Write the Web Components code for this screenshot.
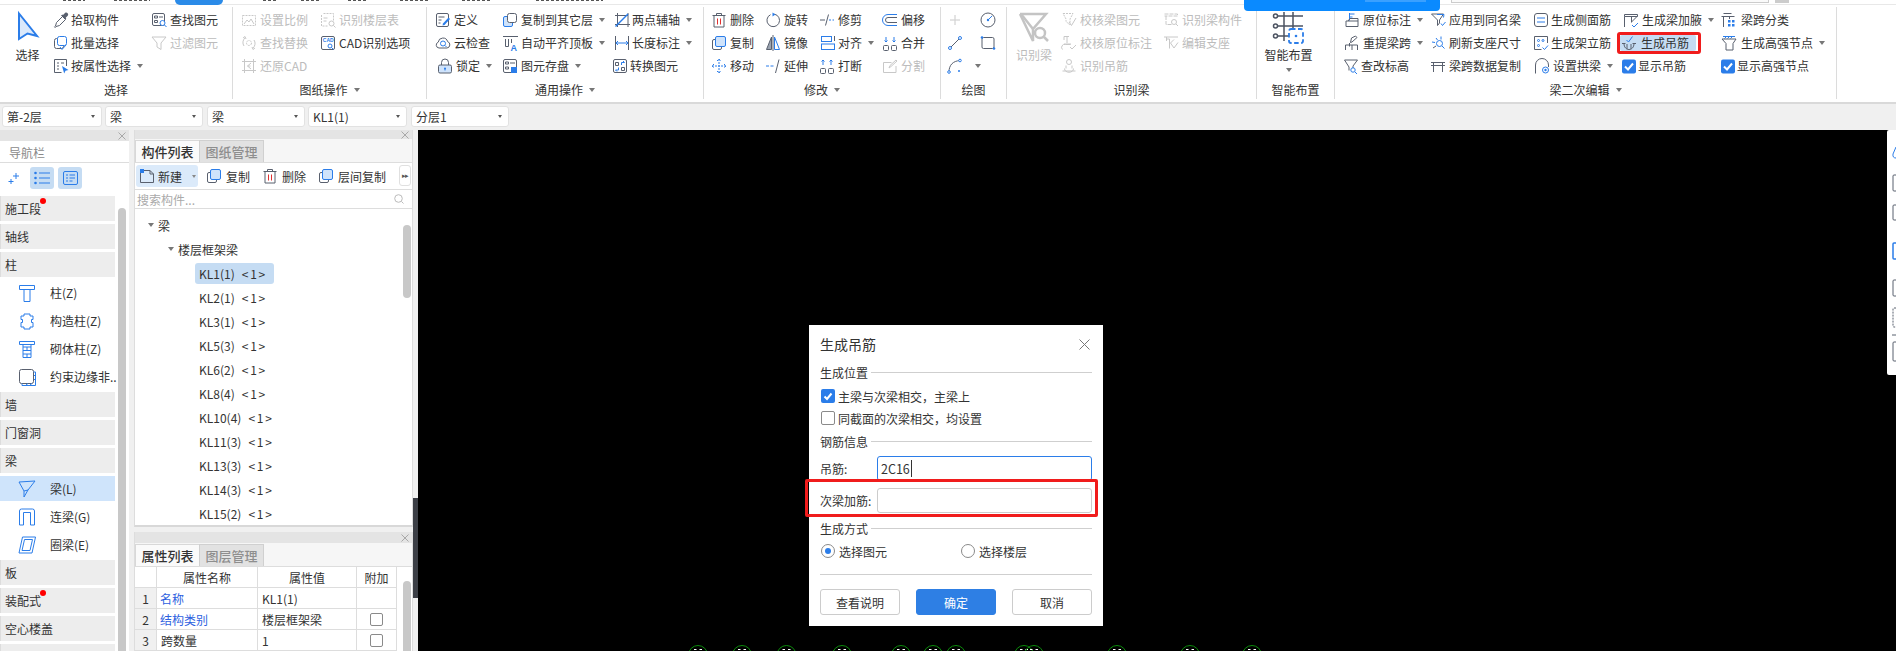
<!DOCTYPE html>
<html lang="zh"><head><meta charset="utf-8"><title>生成吊筋</title>
<style>html,body{margin:0;padding:0;width:1896px;height:651px;overflow:hidden;background:#f0f0f0}</style>
</head><body><gtj-app></gtj-app>
<script>
const I={
picker:'<path d="M9.5 4.5L3.5 10.5 2.5 14l-1 .8.7.7.8-1 3.5-1 6-6M8.5 3.5l4 4" /><path class="dk" d="M10 3l2-2c1-.8 2-.5 2.6.2s.9 1.6.1 2.6l-2 2 .6.8-1 1-4-4 1-1z"/>',
batch:'<rect x="1.5" y="3.5" width="9" height="10" rx="2"/><rect class="b w" x="4.5" y="1.5" width="9" height="9" rx="2"/><path class="b" d="M7 12l2 2.5 4-4.5"/>',
attrsel:'<path d="M13.5 8V1.5h-12v13h7"/><path d="M4 5h2M8 5h3M4 8h2M4 11h2"/><path class="f" d="M9 8l6.5 4-3 .7-1.3 2.8z"/>',
find:'<rect x="1.5" y="1.5" width="12" height="12" rx="1.5"/><path d="M3.5 4h3v2h-3zM8 5h4M3.5 8.5h3v2h-3z"/><circle class="b w" cx="11.5" cy="11" r="2.5"/><path class="b" d="M13.5 13l2 2"/>',
filter:'<path d="M1 2h14L10 8v6.5l-4-2.500V8z"/>',
scale:'<path stroke-dasharray="2 1" d="M1.500 3.500h13v10h-13z"/><path d="M3 12l3-4 2 2 2-3 3 5"/>',
floortable:'<path stroke-dasharray="2 1" d="M3.500 1.500h10v7M1.500 3v11h7"/><path d="M3.500 6h4M3.500 9h3"/><circle cx="11.500" cy="11.500" r="2.500"/><path d="M13.500 13.500l2 2"/>',
replace:'<path d="M3 11a6 6 0 0 1 1-8M13 5a6 6 0 0 1-1 8M2 3l2-1.500L5 4M14 13l-2 1.500L11 12"/><circle cx="8" cy="8" r="2.500" stroke-dasharray="2 1"/>',
cadopt:'<rect x="1.500" y="1.500" width="13" height="13" rx="1.500"/><text class="tx" x="2.800" y="7" font-size="5" font-weight="700">CAD</text><circle class="b w" cx="10" cy="11" r="2"/><path class="b" d="M11.500 12.500l2 2"/>',
restore:'<path d="M3.500 1v14M12.500 1v14M1 3.500h14M1 12.500h14"/><path d="M10 5L6.500 8 10 11M6.500 8h3"/>',
define:'<rect x="1.500" y="1.500" width="12" height="13" rx="1.500"/><path d="M3.500 5h6M3.500 8h3M3.500 11h2"/><path class="f" d="M13.500 5.500l1.500 1.500-5.500 6-2 .5.500-2z"/>',
cloud:'<path d="M4 13a3 3 0 0 1-.8-5.800 4.800 4.800 0 0 1 9.400-.600A3.300 3.300 0 0 1 12 13z"/><circle class="b" cx="8" cy="8.500" r="2.500"/><path class="b" d="M10 10.500l1.500 1.500"/>',
lock:'<path d="M4.500 7V4.500a3.500 3.500 0 0 1 7 0V7"/><rect class="l" x="1.500" y="7" width="13" height="8" rx="1.500"/><path class="b" d="M8 10v2.500"/><circle class="bf" cx="8" cy="10.500" r="1"/>',
copyfloor:'<rect class="l b" x="1.500" y="4.500" width="9" height="10" rx="1.500"/><rect class="w" x="5.500" y="1.500" width="9" height="9" rx="2"/>',
aligntop:'<path d="M1 1.500h15M3.500 4v7.500h3V4M9.500 4v4"/><text class="tx" x="8.500" y="15.500" font-size="9" font-weight="700">A</text>',
save:'<rect x="1.500" y="1.500" width="13" height="13" rx="1.500"/><path d="M3.500 4h3v2h-3zM8 5h5M3.500 9h3v2h-3z"/><rect class="f" x="9" y="9" width="6" height="6"/>',
twoaxis:'<path d="M3.500 1v14M14 3.500H1M14 1v14M1 12.500h15"/><path class="b" d="M1.500 14.500L14 2" stroke-width="1.500"/>',
dim:'<path d="M1.500 1v14M14.500 1v14"/><path class="b" d="M2 8h12M4 6L2 8l2 2M12 6l2 2-2 2"/>',
convert:'<rect x="1.500" y="1.500" width="13" height="13" rx="1.500"/><path d="M3.500 4.500h3v3h-3zM9.500 9.500h3v3h-3z"/><path class="b" d="M9.500 7V4.500h3l-1.500-1.500M6.500 9.500V12h-3l1.500 1.500"/>',
del:'<path d="M1.500 3.500h13M5.500 3V1.500h5V3M3 3.500h10v11.500H3z"/><path stroke="#e33" style="stroke:#e03030" d="M6.500 6.500v6M9.500 6.500v6"/>',
rotate:'<path d="M9.500 2.200a6.300 6.300 0 1 1-4 .5"/><path class="f" style="stroke:none" d="M7.500 .5v4l3-2z"/>',
trim:'<path d="M1 8h5"/><path class="b" d="M10 8h5" stroke-dasharray="2 1.500"/><path d="M9.500 2.500L6.500 13.500"/>',
offset:'<path class="b" d="M15 2.500H6a5.500 5.500 0 0 0 0 11h9"/><path d="M15 5.500H6a2.500 2.500 0 0 0 0 5h9"/>',
copy:'<rect x="1.500" y="4.500" width="9" height="10" rx="1.500"/><rect class="l b" x="4.500" y="1.500" width="10" height="10" rx="1.500"/>',
mirror:'<path d="M6.500 2L1.500 14.500h5z" style="fill:#9aa3b0"/><path class="b" d="M9.500 2l5 12.500h-5z"/><path d="M8 0v16"/>',
align:'<rect class="b" x="2.500" y="1.500" width="10" height="5"/><rect class="b" x="2.500" y="9" width="13" height="5.500"/><path d="M15.500 1v5"/>',
merge:'<rect x="1.500" y="10.500" width="5" height="5" rx="1"/><rect x="9.500" y="10.500" width="5" height="5" rx="1"/><path class="b" d="M4 2v5M2.500 5.500L4 7l1.500-1.500M12 2v5M10.500 5.500L12 7l1.500-1.500"/>',
move:'<path class="b" d="M8 1v14M1 8h14M6 3l2-2 2 2M6 13l2 2 2-2M3 6L1 8l2 2M13 6l2 2-2 2" stroke-dasharray="2 1"/>',
extend:'<path class="b" d="M1 8h9" stroke-dasharray="3 1.500"/><path d="M14 1.500L10.500 15"/>',
brk:'<rect x="1.500" y="10.500" width="5" height="5" rx="1"/><rect x="9.500" y="10.500" width="5" height="5" rx="1"/><path class="b" d="M4 7V2M2.500 3.500L4 2l1.500 1.500M12 7V2M10.500 3.500L12 2l1.500 1.500"/>',
split:'<path d="M14 8v6.500H1.500V4.500h8"/><path d="M7 10l1-2.500L14 2l1 1-6 5.500z"/>',
point:'<path d="M8 3v3M8 10v3M3 8h3M10 8h3"/><circle cx="8" cy="8" r="1.200"/>',
circle:'<circle cx="8" cy="8" r="7"/><path class="b" d="M8 8l4-4"/><circle class="bf" cx="8" cy="8" r="1.200"/>',
line:'<path d="M3 13L13 3"/><circle class="b w" cx="3" cy="13" r="1.500"/><circle class="b w" cx="13" cy="3" r="1.500"/>',
rect:'<rect x="2" y="2.500" width="12" height="11" rx="1.500"/><circle class="bf" cx="2" cy="2.500" r="1.300"/><circle class="bf" cx="14" cy="13.500" r="1.300"/>',
arc:'<path d="M2 14C2 7 6 3 13 2.500"/><circle class="b w" cx="2" cy="14" r="1.300"/><circle class="b w" cx="13" cy="2.500" r="1.300"/><circle class="bf" cx="12" cy="13" r="1"/>',
chk1:'<path stroke-dasharray="2 1" d="M2 1.500h10L9 7v6L5 9.500V7z"/><path class="b" d="M8 10l2.500 3.500L15 6"/>',
chk2:'<path d="M6 2v6M3 5V1.500h5M3 9h7M1.500 14.500a3 3 0 0 1 3-5h5"/><path class="b" d="M9 12l2 2 4-4"/>',
hangr:'<circle cx="8" cy="4" r="2.500"/><path d="M5 7.500v3M11 7.500v3M1.500 13h13M3.500 10.500c0 5 9 5 9 0"/>',
beamcomp:'<path stroke-dasharray="4 1" d="M1.500 2h13v2H1.500M3 4v8.500h6"/><circle cx="11" cy="10" r="2.500"/><path d="M13 12l2 2"/>',
support:'<path d="M1 2h14M3.500 2v4M3.500 4h3v9.500M11 4.500L7.500 8l3.500 5 4-5.500"/>',
orig:'<path d="M5.500 1v7.500M5.500 2h5M5.500 5h3" class="b"/><path d="M2 9h12v5.500H2zM4 9l2-2.500h8L14 9"/>',
apply:'<path d="M1.500 2h12L9.500 8v3l-2 2.500V8z"/><path class="b" d="M7 2.500h7l-.5 3M11 11.500l1.500 2 3-3.500"/>',
side:'<rect x="1.500" y="1.500" width="13" height="13" rx="2.500"/><path class="b" d="M4 6h8M4 10h8"/>',
ridge:'<path d="M5.500 11.500V8M7.500 3l4-2 1.500 1.500-5 4.500-1.500.5z"/><path d="M1.500 15V10h12v5M8 10v5"/>',
refresh:'<path class="b" d="M11 1.500v3M6 3l1.500 2M2 7l3 .5"/><path d="M3 13l3-2"/><circle class="b" cx="9.500" cy="8.500" r="3"/><path class="b" d="M12 11l2.500 2.500"/>',
frame:'<path d="M14.500 8V1.500h-13v13h7"/><circle class="b" cx="5.500" cy="5.500" r="1"/><circle class="b" cx="10" cy="5.500" r="1"/><circle class="b" cx="5.500" cy="10.500" r="1"/><path class="b" d="M9.500 12.500l2 2 3.500-4"/>',
haunch:'<path d="M1.500 2.500h13v2H1.500zM1.500 4.500v10.500M8.500 4.500v6"/><path d="M14 4.500L8.500 10"/><path class="b" d="M9 13l2 2 4-4"/>',
hanger:'<path d="M1 8.500h3.500M11.500 8.500H15M3 8.500c0 8 10 8 10 0"/><path d="M6 9v5M10 9v5"/><path class="b" d="M5.500 5l2 2 4-5.500"/>',
elev:'<path d="M1.500 2h13L10 8v2M1.500 2l4.500 7v3.500"/><circle class="b" cx="10" cy="12" r="2.200"/><path class="b" d="M12 14l2 2"/>',
spancopy:'<path d="M1 4.500h14M3.500 4.500V14M12.500 4.500V14M1 7.500h14"/>',
arch:'<path d="M1.500 12V7a6.500 6.500 0 0 1 13 0v2"/><path d="M1.500 12v3.500"/><circle class="b" cx="11.500" cy="12" r="3"/><circle class="bf" cx="11.500" cy="12" r="1.200"/>',
spancls:'<path d="M2.500 1.500h8M0.500 4.500h13M2.500 4.500V15M8.500 5v2"/><g class="bf"><rect x="7" y="8" width="2.500" height="2.500"/><rect x="11" y="8" width="2.500" height="2.500"/><rect x="7" y="12" width="2.500" height="2.500"/><rect x="11" y="12" width="2.500" height="2.500"/></g>',
hsnode:'<path class="b" d="M2 1.500h12M3.500 3.500l2-2M6.500 3.500l2-2M9.500 3.500l2-2"/><path d="M1 4h14L12 8.500V15H5V8.500z"/>',
chk:'<rect class="bf" x="1" y="1.500" width="14" height="14" rx="2"/><path d="M4 8.500l3 3 5-6" style="stroke:#fff;stroke-width:2"/>'
};
class B extends HTMLElement{connectedCallback(){if(this.shadowRoot)return;const r=this.attachShadow({mode:'open'});r.innerHTML='<style>'+this.constructor.css+'</style>'+this.view();}view(){return'<slot></slot>'}}
const def=(n,css,view)=>{const C=class extends B{};C.css=css;if(view)C.prototype.view=view;customElements.define(n,C)};
const svgBase='svg{display:block;fill:none;stroke:currentColor;overflow:visible}.b{stroke:#2b7de9}.w{fill:#fff}.l{fill:#cfe3fb}.f,.bf{fill:#2b7de9;stroke:none}.dk{fill:currentColor;stroke:none}.tx{fill:#2b7de9;stroke:none;font-family:"Liberation Sans",sans-serif}';
const ic=(n,s=16)=>`<svg width="${s}" height="${s}" viewBox="0 0 16 16">${I[n]||''}</svg>`;

def('top-strip',':host{display:flex;height:5px;box-sizing:border-box;border-bottom:1px solid #e8e8e8;background:#fff;position:relative}.p{margin-left:175px;width:48px;height:5px;background:#2b8be8;border-radius:0 0 9px 9px}.s{margin-left:1228px;width:318px;height:3px;box-sizing:border-box;border:1px solid #ccc;border-top:0;background:#fafafa}.g{margin-left:6px;width:14px;height:3px;background:#ccc}svg{position:absolute;left:0;top:0;display:block}',
()=>'<svg width="700" height="2"><path d="M63 .5h22M114 .5h36M263 .5h14M301 .5h18M348 .5h18M400 .5h29M462 .5h29M536 .5h67" stroke="#555" stroke-dasharray="3 2"/></svg><div class="p"></div><div class="s"></div><div class="g"></div>');

def('rb-item',svgBase+':host{display:flex;align-items:center;height:23px;white-space:nowrap;position:relative;color:#333;line-height:16px}.i{color:#59606e;height:16px;flex:none;position:relative;z-index:1}.t{position:relative;z-index:1}.c{width:0;height:0;border:3px solid transparent;border-top:4px solid #777;border-bottom:0;margin-left:6px}:host([disabled]){color:#bcbcbc}:host([disabled]) .i{color:#c8c8c8}:host([disabled]) .b{stroke:#c8c8c8}:host([disabled]) .f,:host([disabled]) .bf{fill:#c8c8c8}:host([disabled]) .tx{fill:#c8c8c8}.bg{position:absolute;left:-1px;top:4px;width:76px;height:16px;background:#c5dcf3;border-radius:2px}.rd{position:absolute;left:-4px;top:1px;width:84px;height:22px;box-sizing:border-box;border:3px solid #f01c1c;border-radius:3px}',
function(){const a=k=>this.getAttribute(k);const o=+(a('o')||19),ml=+(a('ml')||0);this.style.marginLeft=ml+'px';
return (this.hasAttribute('hot')?'<div class="bg"></div><div class="rd"></div>':'')+`<div class="i" style="width:${o}px">${a('icon')?ic(a('icon')):''}</div><span class="t">${a('label')||''}</span>`+(this.hasAttribute('caret')?'<i class="c"></i>':'')});

def('rb-big',svgBase+':host{display:flex;flex-direction:column;align-items:center;height:69px;padding-top:4px;box-sizing:border-box;color:#333}.i{height:30px;display:flex;align-items:flex-start}.t{line-height:26px;white-space:nowrap}.c{width:0;height:0;border:3px solid transparent;border-top:4px solid #777;border-bottom:0;margin-top:0}:host([disabled]) .t{color:#bcbcbc}',
function(){const k=this.getAttribute('kind');const s={sel:'<svg width="22" height="28" viewBox="0 0 22 28"><path d="M2 1.500L20 24l-9.500-2.500L2 27z" style="fill:#dbe9fb;stroke:#2b7de9;stroke-width:2"/></svg>',
rec:'<svg width="32" height="30" viewBox="0 0 32 30"><g style="stroke:#c4c4c4;stroke-width:2.500"><path d="M2 2h26L15 17v12L2 2M15 17"/><path d="M3 2l12 15"/><circle cx="22" cy="21" r="5" fill="#fff"/><path d="M26 25l4 4"/></g></svg>',
smart:'<svg width="32" height="33" viewBox="0 0 32 33" style="margin-top:-1px"><g style="stroke:#4c5361;stroke-width:1.500"><path d="M11 1v29M20 1v29M4 5h26M4 15h26M4 25h16"/><g style="fill:#fff"><circle cx="2.500" cy="5" r="2"/><circle cx="2.500" cy="15" r="2"/><circle cx="2.500" cy="25" r="2"/></g></g><rect x="16" y="18" width="14" height="14" rx="2" style="fill:#fff;stroke:#2b7de9;stroke-width:1.800;stroke-dasharray:4.500 2.500"/><circle class="bf" cx="23" cy="25" r="1.300"/></svg>'}[k];
return `<div class="i">${s}</div><div class="t">${this.getAttribute('label')}</div>`+(this.hasAttribute('caret')?'<i class="c"></i>':'')});

def('rb-col',':host{display:flex;flex-direction:column;flex:none}');
def('rb-group',':host{display:flex;flex-direction:column;flex:none;height:92px;box-sizing:border-box;border-right:1px solid #dcdcdc;margin-top:2px}.b{display:flex;height:71px;padding-top:1px;box-sizing:border-box}.t{height:21px;padding-top:3px;box-sizing:border-box;line-height:18px;display:flex;justify-content:center;align-items:center;color:#333}.c{width:0;height:0;border:3.500px solid transparent;border-top:4px solid #777;border-bottom:0;margin-left:6px}',
function(){const a=k=>this.getAttribute(k);return `<div class="b" style="padding-left:${a('pl')||0}px"><slot></slot></div><div class="t"><span>${a('label')}</span>${this.hasAttribute('caret')?'<i class="c"></i>':''}</div>`});

const it=(icon,label,x={})=>`<rb-item icon="${icon}" label="${label}"${x.c?' caret':''}${x.d?' disabled':''}${x.hot?' hot':''}${x.o?` o="${x.o}"`:''}${x.ml?` ml="${x.ml}"`:''}></rb-item>`;
const col=(w,h)=>`<rb-col style="width:${w}px">${h}</rb-col>`;
const D={d:1},C={c:1};
const groups=[
['选择',233,0,0,col(53,'<rb-big kind="sel" label="选择" style="padding-left:2px"></rb-big>')+col(98,it('picker','拾取构件',{o:18})+it('batch','批量选择',{o:18})+it('attrsel','按属性选择',{o:18,c:1}))+col(70,it('find','查找图元')+it('filter','过滤图元',D))],
['图纸操作',194,8,1,col(79,it('scale','设置比例',D)+it('replace','查找替换',D)+it('restore','还原CAD',D))+col(100,it('floortable','识别楼层表',D)+it('cadopt','CAD识别选项'))],
['通用操作',277,8,1,col(67,it('define','定义')+it('cloud','云检查')+it('lock','锁定',{ml:2,c:1}))+col(112,it('copyfloor','复制到其它层',C)+it('aligntop','自动平齐顶板',C)+it('save','图元存盘',C))+col(85,it('twoaxis','两点辅轴',{o:18,c:1})+it('dim','长度标注',{o:18,c:1})+it('convert','转换图元',{ml:-2,o:18}))],
['修改',237,7,1,col(54,it('del','删除')+it('copy','复制')+it('move','移动'))+col(54,it('rotate','旋转')+it('mirror','镜像')+it('extend','延伸'))+col(63,it('trim','修剪')+it('align','对齐',C)+it('brk','打断'))+col(50,it('offset','偏移')+it('merge','合并')+it('split','分割',D))],
['绘图',66,6,0,col(33,it('point','',D)+it('line','')+it('arc','',{o:22,c:1}))+col(20,it('circle','')+it('rect',''))],
['识别梁',250,0,0,col(54,'<rb-big kind="rec" label="识别梁" disabled></rb-big>')+col(102,it('chk1','校核梁图元',D)+it('chk2','校核原位标注',D)+it('hangr','识别吊筋',D))+col(85,it('beamcomp','识别梁构件',D)+it('support','编辑支座',D))],
['智能布置',78,0,0,col(63,'<rb-big kind="smart" label="智能布置" caret></rb-big>')],
['梁二次编辑',502,9,1,col(86,it('orig','原位标注',C)+it('ridge','重提梁跨',C)+it('elev','查改标高',{ml:-1,o:18}))+col(103,it('apply','应用到同名梁')+it('refresh','刷新支座尺寸')+it('spancopy','梁跨数据复制'))+col(88,it('side','生成侧面筋',{o:18})+it('frame','生成架立筋',{o:18})+it('arch','设置拱梁',{ml:1,c:1}))+col(100,it('haunch','生成梁加腋',{ml:2,c:1})+it('hanger','生成吊筋',{o:20,hot:1})+it('chk','显示吊筋',{o:17}))+col(110,it('spancls','梁跨分类',{o:20})+it('hsnode','生成高强节点',{o:20,c:1})+it('chk','显示高强节点',{ml:-1,o:17}))]
];
def('ribbon-bar',':host{display:flex;height:99px;box-sizing:border-box;background:#fff;border-bottom:2px solid #d9d9d9;position:relative}.ov{position:absolute;left:1244px;top:-5px;width:196px;height:11px;background:#0a8aff;border-radius:0 0 4px 4px;overflow:hidden}.ov i{display:block;margin-left:121px;width:61px;height:2px;background:#3aa0ff}',
()=>groups.map(g=>`<rb-group label="${g[0]}" style="width:${g[1]}px" pl="${g[2]}"${g[3]?' caret':''}>${g[4]}</rb-group>`).join('')+'<div class="ov"><i></i></div>');

def('combo-box',':host{display:flex;align-items:center;justify-content:space-between;height:21px;box-sizing:border-box;padding:0 6px 0 4px;background:#fff;border:1px solid #e2e2e2;border-radius:3px;color:#333;flex:none}.c{width:0;height:0;border:2.500px solid transparent;border-top:3.500px solid #555;border-bottom:0}',()=>'<slot></slot><i class="c"></i>');
def('combo-bar',':host{display:flex;height:26px;box-sizing:border-box;padding:2px 0 0 2px;background:#f0f0f0}');

def('panel-head',':host{display:flex;justify-content:flex-end;align-items:center;height:11px;background:#e4e4e4;padding-right:3px;color:#aaa}svg{display:block;stroke:#a8a8a8;fill:none}',()=>'<svg width="8" height="8" viewBox="0 0 8 8"><path d="M.5.500l7 7M7.500.500l-7 7"/></svg>');
def('tab-strip',':host{display:flex;height:22px;box-sizing:content-box;padding-top:1px;background:#f6f6f6;border-bottom:1px solid #ddd}div{width:64px;box-sizing:border-box;text-align:center;line-height:22px;font-size:13px;font-weight:500}.a{color:#333;background:#fafafa;border:1px solid #d8d8d8;border-bottom:0;border-right:0}.n{color:#8e8e8e;background:#e2e2e2;border:1px solid #d0d0d0;border-bottom:0;width:65px}',function(){return `<div class="a">${this.getAttribute('a')}</div><div class="n">${this.getAttribute('b')}</div>`});

const NI={
zhu:'<path d="M1.500 1.500h15v4h-15zM5 5.500h8M6 5.500v12h6v-12"/>',
gz:'<path d="M6 2h6v2h3v3.500h-1.500v3H15V15h-3v2H6v-2H3v-4.500h1.500v-3H3V4h3z" stroke-linejoin="round"/>',
qt:'<path d="M1.500 1.500h15v3h-15zM5 4.500v13h8v-13M5 7h8M5 10.500h8M5 14h8M9 7v3.500M9 14v3.500"/>',
ys:'<rect x="1.500" y="1.500" width="14" height="14" rx="2" style="stroke:#59606e"/><path d="M15.500 4h2v13.500H4v-2M16 8l1.500-1.500M16 12l1.500-1.500M8 17l2-1.500M12 17l2-1.500"/>',
liang:'<path d="M1 2L17 1 10 10 6 17V11L1 2M6 11l4-1"/>',
ll:'<path d="M1.500 17V3a2 2 0 0 1 2-2h11a2 2 0 0 1 2 2v14h-4V4.500h-7V17z"/>',
ql:'<path d="M4.500 1h13L14 17H1zM6.500 3.500h8L12 14.500H4z"/>'
};
def('nav-item',svgBase+':host{display:block;position:relative;line-height:16px;color:#333}.band{height:25px;margin-bottom:3px;background:#ededed;box-sizing:border-box;padding-left:4px;line-height:25px;border-left:1px solid #ddd}.dot{position:absolute;left:40px;top:2px;width:6px;height:6px;border-radius:50%;background:#f00}.sub{height:28px;display:flex;align-items:center;padding-left:18px;white-space:nowrap}.sub .ic{width:32px;height:18px;flex:none}svg{stroke:#2b7de9}:host([active]) .sub{height:25px;margin-bottom:2px;background:#cfe4fb}',
function(){const a=k=>this.getAttribute(k);return a('icon')?`<div class="sub"><div class="ic"><svg width="18" height="18" viewBox="0 0 18 18">${NI[a('icon')]}</svg></div><span>${a('label')}</span></div>`:`<div class="band">${a('label')}</div>`+(this.hasAttribute('dot')?'<i class="dot"></i>':'')});
const band=(l,d)=>`<nav-item label="${l}"${d?' dot':''}></nav-item>`;
const sub=(i,l,a)=>`<nav-item icon="${i}" label="${l}"${a?' active':''}></nav-item>`;
def('nav-panel',svgBase+':host{display:flex;flex-direction:column;flex:none;width:129px;height:521px;background:#fff;overflow:hidden}.ttl{height:22px;line-height:23px;padding-left:9px;color:#8a8a8a;border-bottom:1px solid #ddd;box-sizing:border-box;flex:none}.tb{display:flex;height:33px;padding:4px 0 0 8px;box-sizing:border-box;flex:none}.tb .pl{width:22px;padding-top:5px}.tb .btn{width:24px;height:22px;background:#c5dcf3;border-radius:3px;margin-right:4px;display:flex;align-items:center;justify-content:center}.m{display:flex;flex:1;min-height:0}.l{width:115px;flex:none}.g1{margin-top:-1px;margin-bottom:1px}.g2{margin-bottom:1px}.sb{width:8px;margin:12px 0 0 3px;background:#c8c8c8;border-radius:4px 4px 0 0}',
()=>`<panel-head></panel-head><div class="ttl">导航栏</div><div class="tb"><div class="pl"><svg width="12" height="12" viewBox="0 0 12 12" class="b"><path class="b" d="M8 1v6M5 4h6M3 7v5M.5 9.500h5"/></svg></div><div class="btn"><svg width="16" height="14" viewBox="0 0 16 14"><path class="b" d="M5 2h11M5 7h11M5 12h11"/><g class="bf"><circle cx="1.500" cy="2" r="1.300"/><circle cx="1.500" cy="7" r="1.300"/><circle cx="1.500" cy="12" r="1.300"/></g></svg></div><div class="btn"><svg width="15" height="14" viewBox="0 0 15 14"><rect class="b" x=".5" y=".5" width="14" height="13" rx="1.500"/><path class="b" d="M3 4h2M6.500 4H12M3 7h2M6.500 7H12M3 10h2M6.500 10h3"/></svg></div></div>
<div class="m"><div class="l">${band('施工段',1)+band('轴线')+band('柱')}<div class="g1">${sub('zhu','柱(Z)')+sub('gz','构造柱(Z)')+sub('qt','砌体柱(Z)')+sub('ys','约束边缘非..')}</div>${band('墙')+band('门窗洞')+band('梁')}<div class="g2">${sub('liang','梁(L)',1)+sub('ll','连梁(G)')+sub('ql','圈梁(E)')}</div>${band('板')+band('装配式',1)+band('空心楼盖')+band('')}</div><div class="sb"></div></div>`);

def('tool-btn',svgBase+':host{display:flex;align-items:center;flex:none;height:22px;color:#333;white-space:nowrap}.i{height:16px;width:20px;color:#59606e}',function(){return `<div class="i">${ic(this.getAttribute('icon'))}</div><slot></slot>`});

def('tree-row',':host{display:flex;align-items:center;height:24px;color:#333;white-space:nowrap}.c{width:0;height:0;border:3.500px solid transparent;border-top:4px solid #777;border-bottom:0;margin-right:4px}.k{display:flex;align-items:center;height:21px;padding:0 4px;border-radius:3px;box-sizing:border-box}:host([sel]) .k{background:#c5dcf3;width:79px}.v{margin-left:7px;letter-spacing:1.800px}',
function(){const a=k=>this.getAttribute(k);const p=+a('p');this.style.paddingLeft=p+'px';return a('v')?`<div class="k"><span>${a('label')}</span><span class="v">&lt;${a('v')}&gt;</span></div>`:`<i class="c"></i><span>${a('label')}</span>`});

def('comp-panel',svgBase+':host{display:flex;flex-direction:column;height:397px;background:#fff;border-left:1px solid #ddd;border-right:1px solid #ddd;border-bottom:2px solid #d8d8d8;box-sizing:border-box;overflow:hidden;position:relative}.tb{display:flex;height:27px;box-sizing:border-box;padding:2px 0 0 1px;border-bottom:1px solid #ddd;flex:none;position:relative}.nb{display:flex;align-items:center;width:62px;height:22px;background:#dbeafa;border-radius:3px;padding-left:3px;box-sizing:border-box;color:#333}.nb .c{width:0;height:0;border:2.500px solid transparent;border-top:3.500px solid #888;border-bottom:0;margin-left:10px}.nb svg{margin-right:3px;color:#59606e}.tb tool-btn{margin-left:8px}.mr{position:absolute;right:1px;top:2px;width:10px;height:19px;border:1px solid #e0e0e0;border-radius:3px;color:#555;font-size:7px;line-height:19px;text-align:center;letter-spacing:-1px}.se{display:flex;justify-content:space-between;align-items:center;height:19px;box-sizing:border-box;border-bottom:1px solid #ddd;padding:0 8px 0 2px;color:#aaa;flex:none}.se svg{stroke:#bbb}.tr{padding-top:4px;position:relative;flex:1}.sb{position:absolute;left:268px;top:16px;width:8px;height:73px;border-radius:4px;background:#c8c8c8}',
()=>{const ks=[['KL1(1)',1],['KL2(1)'],['KL3(1)'],['KL5(3)'],['KL6(2)'],['KL8(4)'],['KL10(4)'],['KL11(3)'],['KL13(3)'],['KL14(3)'],['KL15(2)']];
return `<panel-head></panel-head><tab-strip a="构件列表" b="图纸管理"></tab-strip><div class="tb"><div class="nb"><svg width="16" height="16" viewBox="0 0 16 16"><path d="M5 2.500h6l3.500 3.500v8.500H1.500V5"/><path d="M11 2.500V6h3.500"/><rect class="f" x="1" y="1" width="4" height="4"/></svg><span>新建</span><i class="c"></i></div><tool-btn icon="copy">复制</tool-btn><tool-btn icon="del" style="margin-left:12px">删除</tool-btn><tool-btn icon="copy" style="margin-left:12px">层间复制</tool-btn><div class="mr">▸▸</div></div>
<div class="se"><span>搜索构件...</span><svg width="10" height="10" viewBox="0 0 10 10"><circle cx="4.500" cy="4.500" r="3.800"/><path d="M7.500 7.500l2 2"/></svg></div>
<div class="tr"><tree-row p="13" label="梁"></tree-row><tree-row p="33" label="楼层框架梁"></tree-row>${ks.map(k=>`<tree-row p="60" label="${k[0]}" v="1"${k[1]?' sel':''}></tree-row>`).join('')}<div class="sb"></div></div>`});

def('prop-panel',svgBase+':host{display:flex;flex-direction:column;flex:1;min-height:0;background:#fff;border-left:1px solid #ddd;border-right:1px solid #ddd;box-sizing:border-box;overflow:hidden;position:relative}.g{display:grid;grid-template-columns:22px 101px 99px 40px;grid-auto-rows:21px;width:262px}.g>div{box-sizing:border-box;border-right:1px solid #ddd;border-bottom:1px solid #ddd;display:flex;align-items:center;padding-left:4px;color:#333;white-space:nowrap}.g>.h{justify-content:center;padding:0}.g>.x{background:#f0f0f0;justify-content:center;padding:0}.g>.bl{color:#2d5fe0;padding-left:3px}.g>.cb{justify-content:center;padding:0}.g>.cb i{width:13px;height:13px;box-sizing:border-box;border:1px solid #8a8a8a;border-radius:2px}.sb{position:absolute;left:268px;top:49px;width:8px;height:90px;border-radius:4px;background:#c8c8c8}',
()=>`<panel-head></panel-head><tab-strip a="属性列表" b="图层管理"></tab-strip><div class="g"><div class="h"></div><div class="h">属性名称</div><div class="h">属性值</div><div class="h">附加</div>
<div class="x">1</div><div class="bl">名称</div><div>KL1(1)</div><div></div>
<div class="x">2</div><div class="bl">结构类别</div><div>楼层框架梁</div><div class="cb"><i></i></div>
<div class="x">3</div><div>跨数量</div><div>1</div><div class="cb"><i></i></div></div><div class="sb"></div>`);

def('field-row',':host{display:flex;align-items:center;height:25px;color:#333}label{width:57px;flex:none;white-space:nowrap}.in{flex:1;height:25px;box-sizing:border-box;border:1px solid #ccc;border-radius:3px;padding-left:3px;line-height:23px;display:flex;align-items:center;font-size:12.500px}.cr{width:1px;height:17px;background:#333;margin-left:1px}:host([focus]) .in{border-color:#2b7de9}',
function(){return `<label>${this.getAttribute('label')}</label><div class="in"><slot></slot>${this.hasAttribute('focus')?'<i class="cr"></i>':''}</div>`});
def('sec-title',':host{display:flex;align-items:center;height:16px;color:#333}.l{flex:1;height:1px;background:#cfcfcf;margin-left:3px}',()=>'<slot></slot><div class="l"></div>');
def('check-row',svgBase+':host{display:flex;align-items:center;height:20px;color:#333;white-space:nowrap}.o{margin-left:1px;width:14px;height:14px;box-sizing:border-box;border:1px solid #8a8a8a;border-radius:2px;margin-right:3px;flex:none}svg{margin-left:1px;margin-right:3px;stroke:none}',
function(){return (this.hasAttribute('on')?'<svg width="14" height="14" viewBox="0 0 14 14"><rect class="bf" width="14" height="14" rx="2"/><path d="M3.500 7.500l2.500 2.500 4.500-5.500" style="stroke:#fff;stroke-width:2;fill:none"/></svg>':'<i class="o"></i>')+'<slot></slot>'});
def('radio-btn',':host{display:flex;align-items:center;height:20px;width:140px;flex:none;color:#333;white-space:nowrap}.r{margin-left:1px;width:14px;height:14px;box-sizing:border-box;border:1px solid #8a8a8a;border-radius:50%;margin-right:4px;display:flex;align-items:center;justify-content:center;flex:none}.r i{width:6px;height:6px;border-radius:50%;background:#2b7de9}',
function(){return `<div class="r">${this.hasAttribute('on')?'<i></i>':''}</div><slot></slot>`});
def('dlg-btn',':host{display:flex;align-items:center;justify-content:center;width:80px;height:26px;box-sizing:border-box;border:1px solid #ccc;border-radius:3px;color:#333;background:#fff}:host([primary]){background:#2e7fe4;border-color:#2e7fe4;color:#fff}');
def('rebar-dialog',':host{position:absolute;left:391px;top:195px;width:294px;height:301px;box-sizing:border-box;background:#fff;padding:7px 11px 11px;display:flex;flex-direction:column}.t{display:flex;justify-content:space-between;align-items:center;height:24px;font-size:14px;color:#333;padding-right:1px}.t svg{stroke:#777;fill:none;display:block;margin-right:1px}.sep{height:1px;background:#cfcfcf;margin-top:13px}.bs{display:flex;justify-content:space-between;margin-top:14px}.rr{display:flex;margin-top:5px}.red{position:absolute;left:-4px;top:154px;width:293px;height:38px;box-sizing:border-box;border:3px solid #f01c1c;border-radius:2px}',
()=>`<div class="t"><span>生成吊筋</span><svg width="11" height="11" viewBox="0 0 11 11"><path d="M.5.500l10 10M10.500.500l-10 10"/></svg></div>
<sec-title style="margin-top:8px">生成位置</sec-title><check-row on style="margin-top:6px">主梁与次梁相交，主梁上</check-row><check-row style="margin-top:2px">同截面的次梁相交，均设置</check-row>
<sec-title style="margin-top:5px">钢筋信息</sec-title><field-row label="吊筋:" focus style="margin-top:7px">2C16</field-row><field-row label="次梁加筋:" style="margin-top:7px"></field-row>
<sec-title style="margin-top:7px">生成方式</sec-title><div class="rr"><radio-btn on>选择图元</radio-btn><radio-btn style="width:132px">选择楼层</radio-btn></div><div class="sep"></div>
<div class="bs"><dlg-btn>查看说明</dlg-btn><dlg-btn primary>确定</dlg-btn><dlg-btn>取消</dlg-btn></div><div class="red"></div>`);

def('side-dock',':host{position:absolute;right:0;top:0;width:9px;height:245px;background:#fff;border-radius:2px 0 0 2px;display:block}svg{display:block;fill:none;stroke:#59606e}',
()=>`<svg width="9" height="245" viewBox="0 0 9 245"><path d="M9 17l-3 7c-.5 3 1 4 3 4" style="stroke:#2b7de9"/><path d="M9 45H7a1 1 0 0 0-1 1v14a1 1 0 0 0 1 1h2"/><path d="M9 75H7a1 1 0 0 0-1 1v13a1 1 0 0 0 1 1h2"/><path d="M9 113H7a1 1 0 0 0-1 1v14a1 1 0 0 0 1 1h2" style="stroke:#2b7de9;stroke-width:1.500"/><path d="M9 150H7a1 1 0 0 0-1 1v14a1 1 0 0 0 1 1h2"/><path stroke-dasharray="2 1" d="M9 178H7a1 1 0 0 0-1 1v17a1 1 0 0 0 1 1h2"/><path d="M5 205h4" /><path d="M9 212H7a1 1 0 0 0-1 1v17a1 1 0 0 0 1 1h2"/></svg>`);

def('cad-canvas',':host{display:block;position:relative;flex:1;background:#000;height:521px;overflow:hidden}svg{position:absolute;left:0;top:0;display:block}',
()=>{const xs=[698,742,786.5,842,901,933,956,1024,1034,1117,1190,1252];
return `<svg width="1478" height="521" viewBox="418 130 1478 521">${xs.map(x=>`<circle cx="${x}" cy="655" r="9.500" fill="none" stroke="#0a8a0a"/><path d="M${x-4} 649.500h2.500M${x+1.500} 649.500h2.500" stroke="#fff"/>`).join('')}</svg><side-dock></side-dock><rebar-dialog></rebar-dialog>`});

def('gtj-app',':host{display:block;width:1896px;height:651px;overflow:hidden;background:#f0f0f0;font:12px "Noto Sans CJK SC","Noto Sans",sans-serif;color:#333}.main{display:flex;height:521px}.mid{width:279px;margin:0 5px;flex:none;display:flex;flex-direction:column}.gap{height:5px;flex:none}.sp{position:absolute;left:413px;top:498px;width:5px;height:100px;background:#3c3f46}',
()=>`<top-strip></top-strip><ribbon-bar></ribbon-bar><combo-bar><combo-box style="width:100px">第-2层</combo-box><combo-box style="width:98px;margin-left:3px">梁</combo-box><combo-box style="width:98px;margin-left:4px">梁</combo-box><combo-box style="width:99px;margin-left:3px">KL1(1)</combo-box><combo-box style="width:98px;margin-left:4px">分层1</combo-box></combo-bar>
<div class="main"><nav-panel></nav-panel><div class="mid"><comp-panel></comp-panel><div class="gap"></div><prop-panel></prop-panel></div><cad-canvas></cad-canvas></div><div class="sp"></div>`);
</script></body></html>
